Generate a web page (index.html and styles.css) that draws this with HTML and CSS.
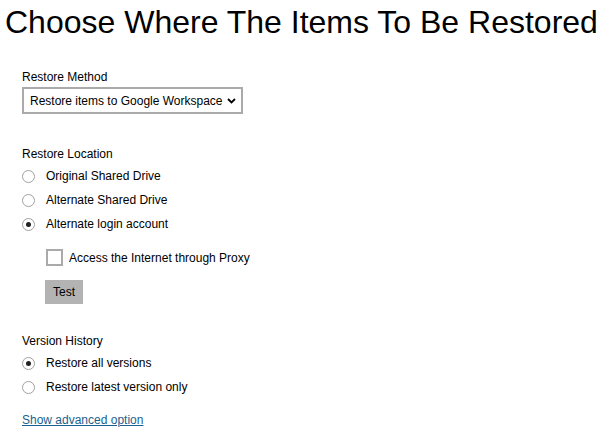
FILE: index.html
```html
<!DOCTYPE html>
<html>
<head>
<meta charset="utf-8">
<link rel="stylesheet" href="styles.css">
</head>
<body>
<h1 class="title">Choose Where The Items To Be Restored</h1>
<div class="content">
  <div class="group">
    <div class="label">Restore Method</div>
    <div class="select-wrap">
      <select class="select">
        <option>Restore items to Google Workspace</option>
      </select>
      <svg class="chev" width="9" height="6" viewBox="0 0 9 6"><path d="M1 1 L4.5 4.5 L8 1" fill="none" stroke="#000" stroke-width="1.8"/></svg>
    </div>
  </div>
  <div class="group loc">
    <div class="label">Restore Location</div>
    <label class="radio-row"><span class="radio"></span>Original Shared Drive</label>
    <label class="radio-row"><span class="radio"></span>Alternate Shared Drive</label>
    <label class="radio-row"><span class="radio checked"></span>Alternate login account</label>
    <div class="sub">
      <label class="check-row"><span class="checkbox"></span>Access the Internet through Proxy</label>
      <button class="btn">Test</button>
    </div>
  </div>
  <div class="group ver">
    <div class="label">Version History</div>
    <label class="radio-row"><span class="radio checked"></span>Restore all versions</label>
    <label class="radio-row"><span class="radio"></span>Restore latest version only</label>
  </div>
  <a class="link" href="#">Show advanced option</a>
</div>
</body>
</html>
```
FILE: styles.css
```css
html, body {
  margin: 0;
  padding: 0;
  background: #fff;
}
body {
  font-family: "Liberation Sans", Arial, sans-serif;
  color: #000;
  font-size: 12px;
}
.title {
  font-weight: normal;
  font-size: 32px;
  margin: 0;
  padding: 4px 0 0 5px;
  line-height: 37px;
  white-space: nowrap;
}
.content {
  padding: 29px 0 0 22px;
}
.label {
  line-height: 14px;
  margin-bottom: 3px;
}
.select-wrap {
  position: relative;
  width: 221px;
}
.select {
  display: block;
  appearance: none;
  -webkit-appearance: none;
  font-family: "Liberation Sans", Arial, sans-serif;
  font-size: 12px;
  width: 221px;
  height: 27px;
  border: 2px solid #aaa;
  border-radius: 0;
  background: #fff;
  color: #000;
  padding: 0 0 0 6px;
  margin: 0;
}
.chev {
  position: absolute;
  right: 7px;
  top: 11px;
}
.loc {
  margin-top: 33px;
}
.radio-row {
  display: flex;
  align-items: center;
  height: 24px;
}
.radio {
  width: 11px;
  height: 11px;
  border: 1.5px solid #a0a0a0;
  border-radius: 50%;
  margin-right: 11px;
  position: relative;
  box-sizing: content-box;
}
.radio.checked::after {
  content: "";
  position: absolute;
  left: 3px;
  top: 3px;
  width: 5px;
  height: 5px;
  border-radius: 50%;
  background: #222;
}
.sub {
  padding-left: 24px;
  padding-top: 13px;
}
.check-row {
  display: flex;
  align-items: center;
  height: 17px;
}
.checkbox {
  width: 13px;
  height: 13px;
  border: 2px solid #aaa;
  margin-right: 6px;
}
.btn {
  display: block;
  margin: 14px 0 0 -1px;
  font-family: "Liberation Sans", Arial, sans-serif;
  font-size: 12px;
  width: 38px;
  height: 24px;
  border: none;
  background: #b3b3b3;
  color: #000;
  padding: 0;
}
.ver {
  margin-top: 30px;
}
.link {
  display: inline-block;
  margin-top: 14px;
  color: #1a5f8f;
}
```
